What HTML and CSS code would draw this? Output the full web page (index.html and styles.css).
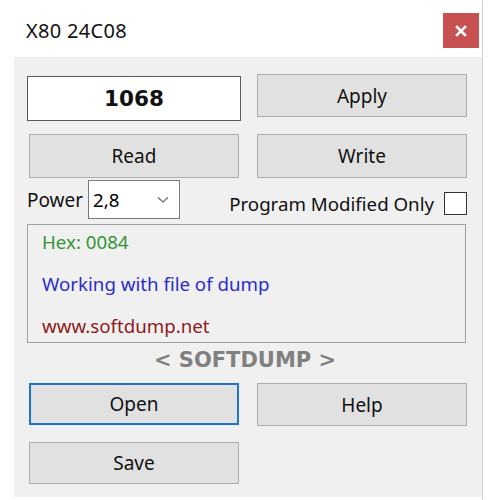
FILE: index.html
```html
<!DOCTYPE html>
<html>
<head>
<meta charset="utf-8">
<link rel="stylesheet" href="styles.css">
</head>
<body>
<div class="window">
  <div class="titlebar">
    <span class="title">X80 24C08</span>
    <div class="close">
      <svg width="12" height="12" viewBox="0 0 12 12"><path d="M2 2 L10 10 M10 2 L2 10" stroke="#fff" stroke-width="2.6" stroke-linecap="square"/></svg>
    </div>
  </div>
  <div class="client">
    <div class="row row1">
      <div class="valuebox">1068</div>
      <div class="btn btn-apply">Apply</div>
    </div>
    <div class="row row2">
      <div class="btn">Read</div>
      <div class="btn">Write</div>
    </div>
    <div class="row row3">
      <div class="power">
        <span class="label">Power</span>
        <div class="select">
          <span>2,8</span>
          <svg class="chev" width="12" height="8" viewBox="0 0 12 8"><path d="M1 1.5 L6 6 L11 1.5" fill="none" stroke="#666" stroke-width="1.2"/></svg>
        </div>
      </div>
      <div class="modified">
        <span class="label">Program Modified Only</span>
        <span class="checkbox"></span>
      </div>
    </div>
    <div class="infobox">
      <div class="line green">Hex: 0084</div>
      <div class="line blue">Working with file of dump</div>
      <div class="line red">www.softdump.net</div>
    </div>
    <div class="brand">&lt; SOFTDUMP &gt;</div>
    <div class="row row4">
      <div class="btn btn-focus">Open</div>
      <div class="btn">Help</div>
    </div>
    <div class="row row5">
      <div class="btn">Save</div>
    </div>
  </div>
</div>
</body>
</html>
```

FILE: styles.css
```css
html, body {
  margin: 0;
  padding: 0;
  background: #ffffff;
}
body {
  font-family: "Noto Sans", "Open Sans", sans-serif;
  color: #000;
  width: 500px;
  height: 500px;
  overflow: hidden;
}
.window {
  width: 483px;
  height: 500px;
  border-right: 1px solid #d3d3d3;
  box-sizing: border-box;
}
.titlebar {
  height: 57px;
  display: flex;
  align-items: flex-start;
  justify-content: space-between;
  padding-left: 26px;
  box-sizing: border-box;
}
.title {
  font-size: 20px;
  margin-top: 17px;
  letter-spacing: 0.3px;
  color: #111;
}
.close {
  width: 36px;
  height: 35px;
  margin-top: 13px;
  margin-right: 3px;
  background: #c75050;
  display: flex;
  align-items: center;
  justify-content: center;
}
.client {
  margin-left: 14px;
  width: 468px;
  height: 440px;
  background: #f0f0f0;
  box-sizing: border-box;
  padding: 0 15px 0 13px;
  display: flex;
  flex-direction: column;
}
.row {
  display: flex;
  justify-content: space-between;
  align-items: flex-start;
}
.btn {
  width: 210px;
  height: 43px;
  box-sizing: border-box;
  background: #e1e1e1;
  border: 1px solid #adadad;
  display: flex;
  align-items: center;
  justify-content: center;
  font-size: 19px;
  color: #111;
}
.row1 {
  margin-top: 17px;
}
.valuebox {
  width: 214px;
  height: 45px;
  margin-top: 2px;
  box-sizing: border-box;
  background: #fff;
  border: 1px solid #5a5a5a;
  display: flex;
  align-items: center;
  justify-content: center;
  font-family: "DejaVu Sans", sans-serif;
  font-weight: bold;
  font-size: 21.5px;
  color: #111;
}
.row2 {
  margin-top: 13px;
  padding-left: 2px;
}
.row2 .btn {
  height: 44px;
}
.row3 {
  margin-top: 2px;
  height: 39px;
  align-items: center;
}
.power {
  display: flex;
  align-items: center;
}
.label {
  font-size: 18.7px;
  color: #111;
}
.power .label {
  font-size: 19px;
}
.select {
  margin-left: 5px;
  width: 92px;
  height: 39px;
  box-sizing: border-box;
  background: #fff;
  border: 1px solid #7a7a7a;
  display: flex;
  align-items: center;
  justify-content: space-between;
  padding: 0 10px 0 4px;
  font-size: 18.7px;
}
.chev {
  margin-top: 1px;
}
.modified {
  display: flex;
  align-items: center;
  margin-top: 7px;
}
.checkbox {
  width: 23px;
  height: 23px;
  box-sizing: border-box;
  margin-left: 10px;
  background: #fff;
  border: 1px solid #333;
}
.infobox {
  margin-top: 5px;
  width: 439px;
  height: 119px;
  box-sizing: border-box;
  border: 1px solid #a0a0a0;
  padding: 2px 0 0 14px;
  display: flex;
  flex-direction: column;
  gap: 13px;
}
.line {
  font-size: 18.7px;
  line-height: 29px;
}
.green { color: #359535; }
.blue { color: #2c2ccc; }
.red { color: #8e1b1b; }
.brand {
  margin-top: 2px;
  text-align: center;
  font-family: "DejaVu Sans", sans-serif;
  font-weight: bold;
  font-size: 21px;
  color: #808080;
  line-height: 30px;
  padding-right: 4px;
}
.row4 {
  margin-top: 8px;
  padding-left: 2px;
}
.btn-focus {
  border: 2px solid #1c73c8;
  height: 42px;
}
.row5 {
  margin-top: 16px;
  padding-left: 2px;
}
.row5 .btn {
  height: 42px;
}
```
